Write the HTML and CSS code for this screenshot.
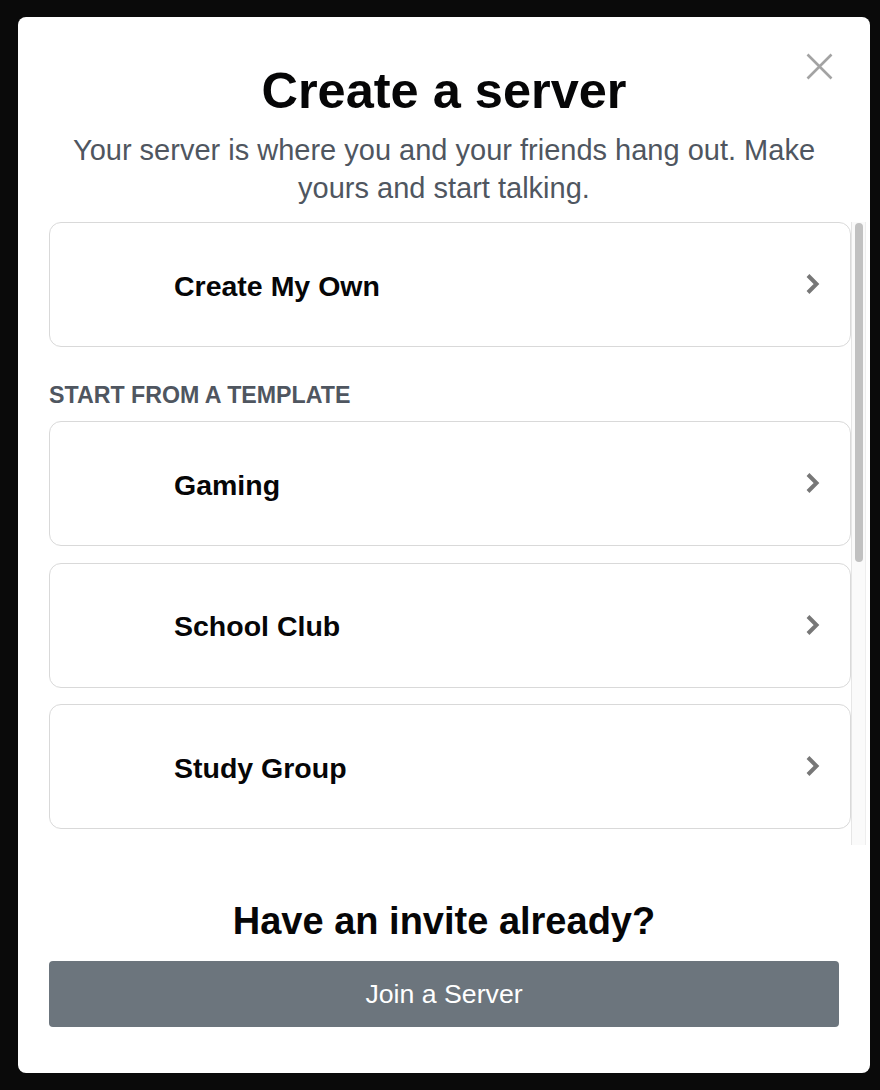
FILE: index.html
```html
<!DOCTYPE html>
<html lang="en">
<head>
<meta charset="utf-8">
<title>Create a server</title>
<link rel="stylesheet" href="styles.css">
</head>
<body>
<div class="modal">
  <button class="close" aria-label="Close">
    <svg width="27" height="27" viewBox="0 0 27 27"><path d="M1.5 1.5 L25.5 25.5 M25.5 1.5 L1.5 25.5" stroke="#a3a3a3" stroke-width="2.6" fill="none"/></svg>
  </button>
  <h1 class="title">Create a server</h1>
  <p class="subtitle">Your server is where you and your friends hang out. Make yours and start talking.</p>
  <div class="scroll-area">
    <div class="list">
      <div class="option">
        <span class="option-label">Create My Own</span>
        <svg class="chev" width="16" height="24" viewBox="0 0 16 24"><path d="M3 3.5 L11.5 12 L3 20.5" stroke="#777" stroke-width="4" fill="none"/></svg>
      </div>
      <div class="section-label">Start from a template</div>
      <div class="option">
        <span class="option-label">Gaming</span>
        <svg class="chev" width="16" height="24" viewBox="0 0 16 24"><path d="M3 3.5 L11.5 12 L3 20.5" stroke="#777" stroke-width="4" fill="none"/></svg>
      </div>
      <div class="option">
        <span class="option-label">School Club</span>
        <svg class="chev" width="16" height="24" viewBox="0 0 16 24"><path d="M3 3.5 L11.5 12 L3 20.5" stroke="#777" stroke-width="4" fill="none"/></svg>
      </div>
      <div class="option">
        <span class="option-label">Study Group</span>
        <svg class="chev" width="16" height="24" viewBox="0 0 16 24"><path d="M3 3.5 L11.5 12 L3 20.5" stroke="#777" stroke-width="4" fill="none"/></svg>
      </div>
    </div>
    <div class="track"><div class="thumb"></div></div>
  </div>
  <h2 class="invite">Have an invite already?</h2>
  <button class="join">Join a Server</button>
</div>
</body>
</html>
```

FILE: styles.css
```css
html, body {
  margin: 0;
  padding: 0;
  background: #0a0a0a;
}
body {
  font-family: "Liberation Sans", Arial, Helvetica, sans-serif;
  color: #060607;
  padding: 17px 10px 17px 18px;
}
.modal {
  position: relative;
  width: 852px;
  height: 1056px;
  box-sizing: border-box;
  background: #fff;
  border-radius: 8px;
  padding: 44px 31px 46px 31px;
  display: flex;
  flex-direction: column;
}
.close {
  position: absolute;
  top: 36px;
  right: 37px;
  width: 27px;
  height: 27px;
  padding: 0;
  border: 0;
  background: none;
  display: block;
}
.close svg { display: block; }
.title {
  margin: 0;
  font-size: 50.5px;
  line-height: 60px;
  font-weight: 700;
  text-align: center;
}
.subtitle {
  margin: 10px 0 0;
  font-size: 29px;
  line-height: 38px;
  color: #4f5660;
  text-align: center;
}
.scroll-area {
  margin-top: 15px;
  margin-right: -27px;
  height: 623px;
  display: flex;
  flex: none;
}
.list {
  flex: 1;
  min-width: 0;
  overflow: hidden;
}
.track {
  width: 15px;
  flex: none;
  box-sizing: border-box;
  background: #fafafa;
  border-left: 1px solid #e6e6e6;
  border-right: 1px solid #eeeeee;
  padding: 1px 2px 0 3px;
}
.thumb {
  height: 339px;
  border-radius: 4px;
  background: #c1c1c1;
}
.option {
  height: 125px;
  box-sizing: border-box;
  border: 1px solid #d9d9d9;
  border-radius: 12px;
  display: flex;
  align-items: center;
  padding: 3px 29px 0 124px;
  margin-bottom: 16.5px;
}
.option-label {
  flex: 1;
  font-size: 28.5px;
  font-weight: 700;
  color: #060607;
}
.chev { display: block; flex: none; margin-top: -4px; }
.section-label {
  margin: 34px 0 12px;
  font-size: 23.2px;
  line-height: 28px;
  font-weight: 700;
  text-transform: uppercase;
  color: #4f5660;
}
.invite {
  margin: 54px 0 0;
  font-size: 38px;
  line-height: 44px;
  font-weight: 700;
  text-align: center;
}
.join {
  margin-top: 18px;
  height: 66px;
  width: 100%;
  border: 0;
  border-radius: 4px;
  background: #6c757d;
  color: #fff;
  font-family: "Liberation Sans", Arial, Helvetica, sans-serif;
  font-size: 26.7px;
}
```
